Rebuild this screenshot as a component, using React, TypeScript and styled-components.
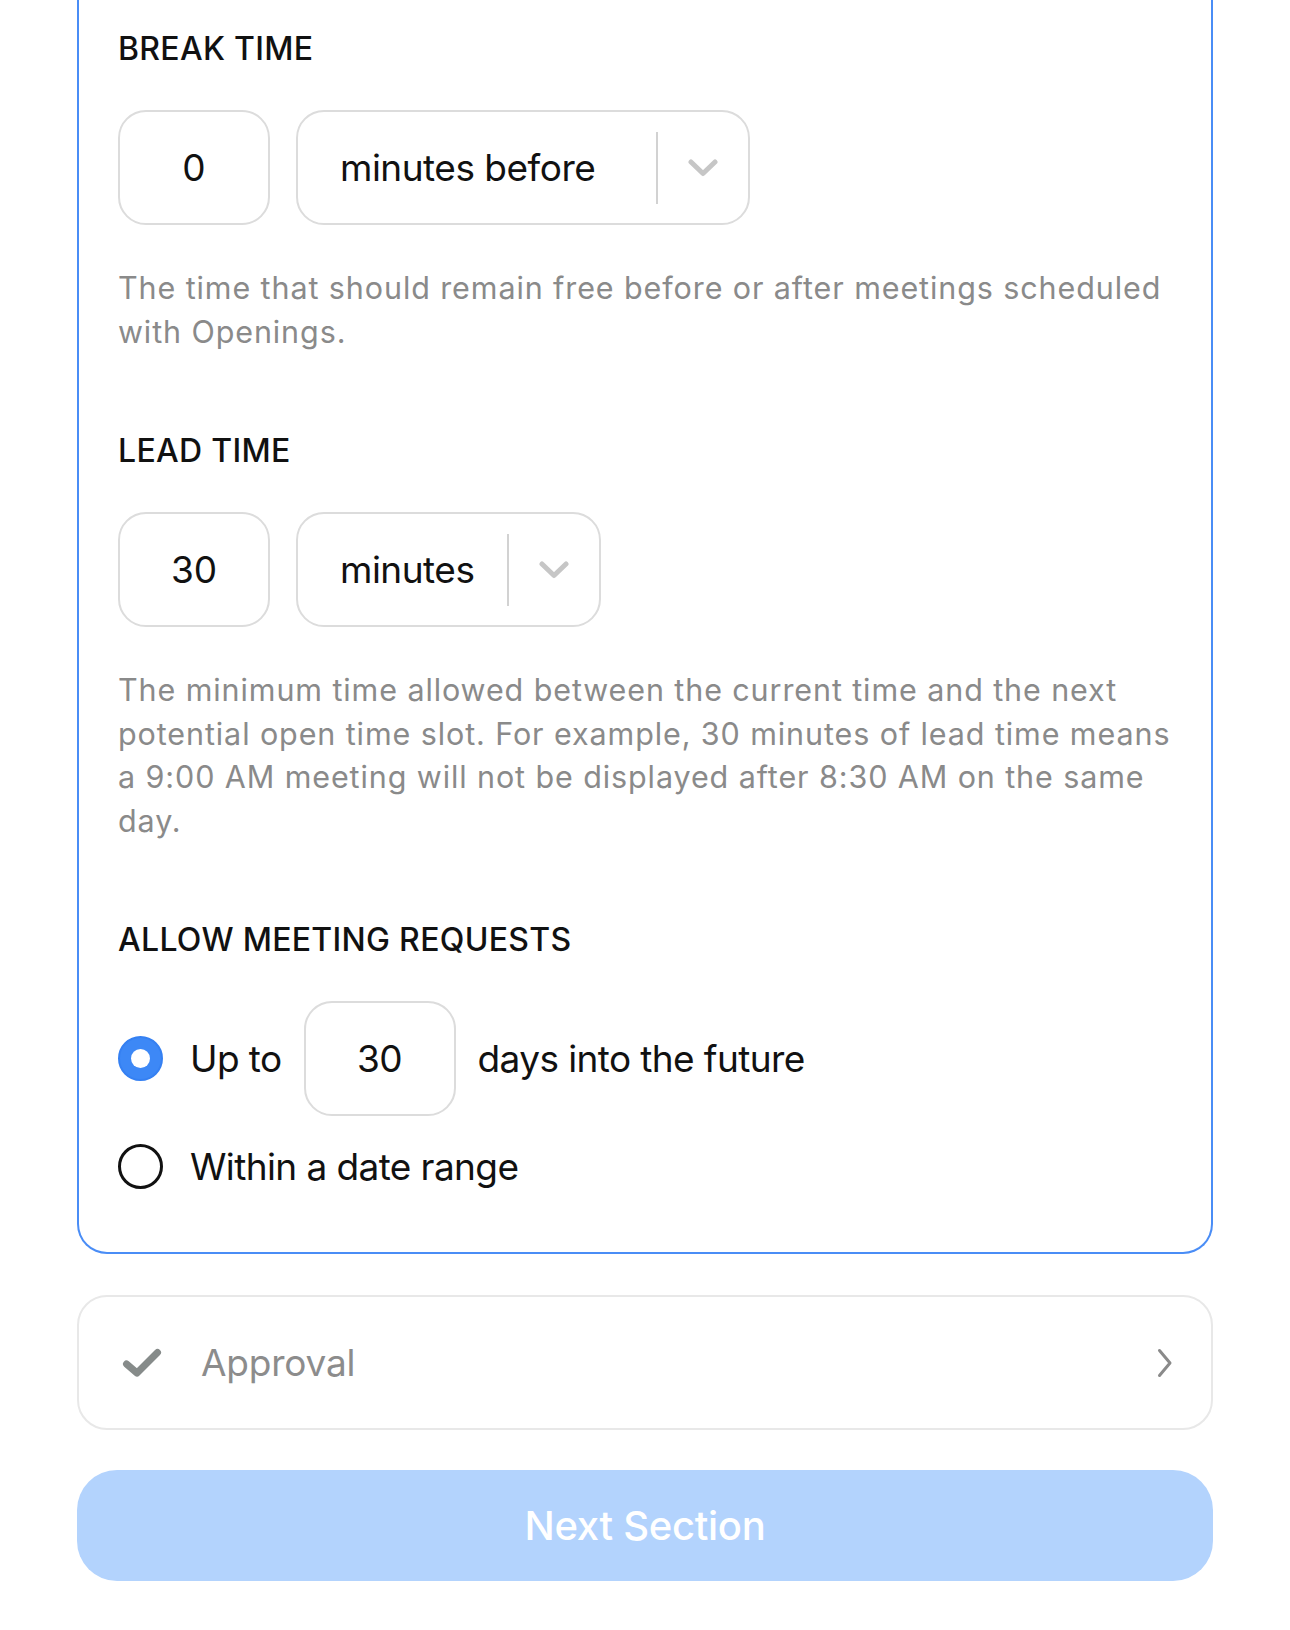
import React from 'react';
import styled, { createGlobalStyle } from 'styled-components';

const GlobalStyle = createGlobalStyle`
  html, body {
    margin: 0;
    padding: 0;
    background: #ffffff;
  }
  body {
    font-family: Inter, 'Noto Sans', 'Liberation Sans', sans-serif;
    color: #111111;
    -webkit-font-smoothing: antialiased;
  }
  * {
    box-sizing: border-box;
  }
`;

const Page = styled.div`
  width: 1290px;
  padding: 0 77px 50px;
`;

const Card = styled.div`
  border: 2px solid #4a8df6;
  border-top: none;
  border-radius: 0 0 30px 30px;
  padding: 29px 39px 56px;
`;

const Section = styled.section`
  & + & {
    margin-top: 78px;
  }
`;

const Heading = styled.h3`
  margin: 0 0 41px;
  font-size: 32px;
  line-height: 40px;
  font-weight: 500;
  letter-spacing: 0.3px;
  color: #111111;
`;

const Row = styled.div`
  display: flex;
  align-items: center;
  gap: 26px;
`;

const NumberBox = styled.div`
  width: 152px;
  height: 115px;
  border: 2px solid #dcdcdc;
  border-radius: 28px;
  display: flex;
  align-items: center;
  justify-content: center;
  font-size: 37px;
  color: #111111;
  flex-shrink: 0;
`;

const SelectBox = styled.div<{ $width: number }>`
  width: ${(p) => p.$width}px;
  height: 115px;
  border: 2px solid #dcdcdc;
  border-radius: 28px;
  display: flex;
  align-items: center;
`;

const SelectLabel = styled.span`
  flex: 1;
  padding-left: 42px;
  font-size: 37px;
  letter-spacing: -0.5px;
  color: #111111;
  white-space: nowrap;
`;

const SelectDivider = styled.span`
  width: 2px;
  height: 72px;
  background: #d2d2d2;
`;

const ChevronSlot = styled.span`
  width: 90px;
  display: flex;
  align-items: center;
  justify-content: center;
`;

const Help = styled.p`
  margin: 41px -40px 0 0;
  font-size: 30.5px;
  line-height: 43.5px;
  color: #8a8a8a;
  letter-spacing: 0.9px;
`;

const RadioRow = styled.div<{ $height: number }>`
  display: flex;
  align-items: center;
  gap: 22px;
  height: ${(p) => p.$height}px;
  font-size: 37px;
  letter-spacing: -0.6px;
  color: #111111;

  & + & {
    margin-top: 20px;
  }
`;

const Radio = styled.span<{ $checked?: boolean }>`
  width: 45px;
  height: 45px;
  border-radius: 50%;
  margin-right: 5px;
  flex-shrink: 0;
  display: flex;
  align-items: center;
  justify-content: center;
  background: ${(p) => (p.$checked ? '#3d88f6' : '#ffffff')};
  border: ${(p) => (p.$checked ? '2px solid #3580f2' : '3px solid #111111')};

  &::after {
    content: '';
    display: ${(p) => (p.$checked ? 'block' : 'none')};
    width: 19px;
    height: 19px;
    border-radius: 50%;
    background: #ffffff;
  }
`;

const StepCard = styled.div`
  margin-top: 41px;
  height: 135px;
  border: 2px solid #e8e8e8;
  border-radius: 30px;
  padding: 0 38px 0 43px;
  display: flex;
  align-items: center;
`;

const StepCheck = styled.svg`
  width: 40px;
  height: 30px;
  margin-right: 39px;
  flex-shrink: 0;
`;

const StepTitle = styled.span`
  flex: 1;
  font-size: 37px;
  letter-spacing: -0.2px;
  color: #8c8c8c;
`;

const NextButton = styled.button`
  display: block;
  width: 100%;
  margin-top: 40px;
  height: 111px;
  border: none;
  border-radius: 40px;
  background: #b3d3fd;
  color: #ffffff;
  font-family: inherit;
  font-size: 40px;
  font-weight: 500;
  letter-spacing: -0.3px;
`;

const ChevronDown = () => (
  <svg width="30" height="20" viewBox="0 0 30 20">
    <polyline
      points="3,4 15,15.5 27,4"
      fill="none"
      stroke="#c6c6c6"
      strokeWidth="5"
      strokeLinecap="round"
      strokeLinejoin="round"
    />
  </svg>
);

const ChevronRight = () => (
  <svg width="16" height="30" viewBox="0 0 16 30">
    <polyline
      points="2.5,2.5 13,15 2.5,27.5"
      fill="none"
      stroke="#8a8a8a"
      strokeWidth="3"
      strokeLinecap="round"
      strokeLinejoin="round"
    />
  </svg>
);

const Select: React.FC<{ label: string; width: number }> = ({ label, width }) => (
  <SelectBox $width={width}>
    <SelectLabel>{label}</SelectLabel>
    <SelectDivider />
    <ChevronSlot>
      <ChevronDown />
    </ChevronSlot>
  </SelectBox>
);

export default function App() {
  return (
    <>
      <GlobalStyle />
      <Page>
        <Card>
          <Section>
            <Heading>BREAK TIME</Heading>
            <Row>
              <NumberBox>0</NumberBox>
              <Select label="minutes before" width={454} />
            </Row>
            <Help>
              The time that should remain free before or after meetings scheduled
              <br />
              with Openings.
            </Help>
          </Section>

          <Section>
            <Heading>LEAD TIME</Heading>
            <Row>
              <NumberBox>30</NumberBox>
              <Select label="minutes" width={305} />
            </Row>
            <Help>
              The minimum time allowed between the current time and the next
              <br />
              potential open time slot. For example, 30 minutes of lead time means
              <br />
              a 9:00 AM meeting will not be displayed after 8:30 AM on the same
              <br />
              day.
            </Help>
          </Section>

          <Section>
            <Heading>ALLOW MEETING REQUESTS</Heading>
            <RadioRow $height={115}>
              <Radio $checked />
              <span>Up to</span>
              <NumberBox>30</NumberBox>
              <span>days into the future</span>
            </RadioRow>
            <RadioRow $height={60}>
              <Radio />
              <span>Within a date range</span>
            </RadioRow>
          </Section>
        </Card>

        <StepCard>
          <StepCheck viewBox="0 0 40 30">
            <polyline
              points="4.5,16 15,25 35.5,4.5"
              fill="none"
              stroke="#868b8a"
              strokeWidth="7"
              strokeLinecap="round"
              strokeLinejoin="round"
            />
          </StepCheck>
          <StepTitle>Approval</StepTitle>
          <ChevronRight />
        </StepCard>

        <NextButton type="button">Next Section</NextButton>
      </Page>
    </>
  );
}
